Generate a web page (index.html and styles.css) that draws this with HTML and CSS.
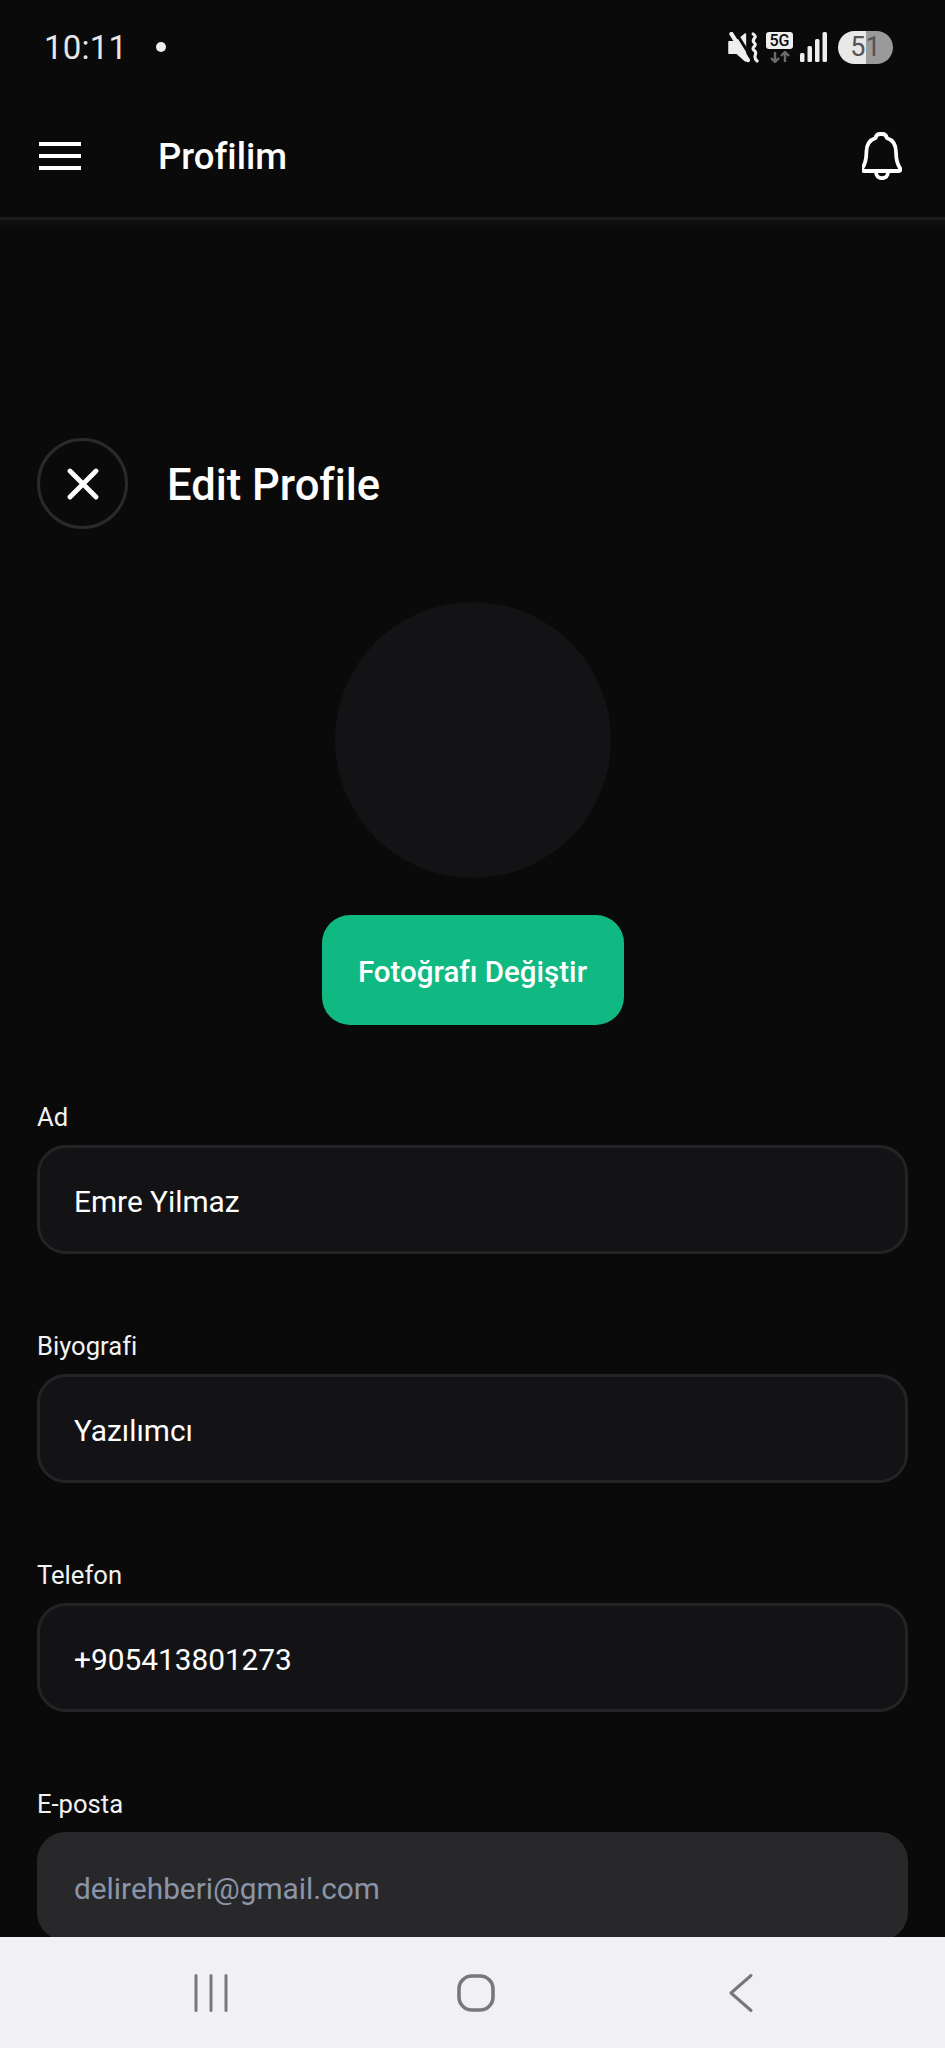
FILE: index.html
```html
<!DOCTYPE html>
<html lang="tr">
<head>
    <meta charset="UTF-8">
    <meta name="viewport" content="width=device-width, initial-scale=1.0">
    <title>Profilim</title>
    <link rel="stylesheet" href="styles.css">
</head>
<body>
    <div class="phone">

        <!-- Status bar -->
        <div class="status-bar">
            <div class="status-left">
                <span class="clock">10:11</span>
                <span class="status-dot"></span>
            </div>
            <div class="status-right">
                <svg class="icon-mute" viewBox="0 0 32 32" width="31" height="31">
                    <path d="M1 10h7l10 -8v28l-9 -8h-8z" fill="#eee" stroke="#eee" stroke-width="1.500" stroke-linejoin="round"/>
                    <path d="M7 -1l20 32" stroke="#0a0a0b" stroke-width="3"/>
                    <path d="M3.500 2l17 27" stroke="#eee" stroke-width="4.400" stroke-linecap="round"/>
                    <path d="M26 2c6 4 -3 5 1 9c4 3 -4 5 0 8c5 3 -3 6 3 11" fill="none" stroke="#eee" stroke-width="3.200" stroke-linecap="round"/>
                </svg>
                <div class="network">
                    <span class="network-label">5G</span>
                    <svg viewBox="0 0 22 12" width="22" height="12">
                        <path d="M6 1v10M2 7l4 4l4 -4M16 11v-10M12 5l4 -4l4 4" fill="none" stroke="#6a6a6a" stroke-width="2.400"/>
                    </svg>
                </div>
                <svg class="icon-signal" viewBox="0 0 27 30" width="27" height="30">
                    <rect x="0" y="21" width="4.500" height="9" rx="1.500"/>
                    <rect x="7.500" y="14" width="4.500" height="16" rx="1.500"/>
                    <rect x="15" y="7" width="4.500" height="23" rx="1.500"/>
                    <rect x="22.500" y="0" width="4.500" height="30" rx="1.500"/>
                </svg>
                <div class="battery">51</div>
            </div>
        </div>

        <!-- Top bar -->
        <header class="top-bar">
            <div class="menu-icon">
                <span></span>
                <span></span>
                <span></span>
            </div>
            <h1 class="top-title">Profilim</h1>
            <svg class="bell" viewBox="0 0 40 48" width="40" height="48">
                <path d="M20 2c2.800 0 4.500 1.800 4.800 4c6.200 2 9.200 7.500 9.200 14c0 8.500 1.500 12.500 4.200 16.500c.8 1.300 0 2.500 -1.500 2.500h-35c-1.500 0 -2.300 -1.200 -1.500 -2.500c2.700 -4 4.200 -8 4.200 -16.500c0 -6.500 3 -12 9.200 -14c.3 -2.200 2 -4 4.800 -4z" fill="none" stroke="#fff" stroke-width="3.800" stroke-linejoin="round"/>
                <path d="M14 40c0 4 2.600 6.200 6 6.200s6 -2.200 6 -6.200" fill="none" stroke="#fff" stroke-width="3.800"/>
            </svg>
        </header>

        <!-- Main Content -->
        <main class="content">
            <div class="edit-head">
                <button class="close-btn" aria-label="Close">
                    <svg viewBox="0 0 32 32" width="32" height="32">
                        <path d="M3 3l26 26M29 3l-26 26" stroke="#fff" stroke-width="4.800" stroke-linecap="round"/>
                    </svg>
                </button>
                <h2 class="edit-title">Edit Profile</h2>
            </div>

            <div class="avatar-block">
                <div class="avatar"></div>
                <button class="photo-btn">Fotoğrafı Değiştir</button>
            </div>

            <div class="field">
                <label class="field-label">Ad</label>
                <div class="field-input">Emre Yilmaz</div>
            </div>
            <div class="field">
                <label class="field-label">Biyografi</label>
                <div class="field-input">Yazılımcı</div>
            </div>
            <div class="field">
                <label class="field-label">Telefon</label>
                <div class="field-input">+905413801273</div>
            </div>
            <div class="field">
                <label class="field-label">E-posta</label>
                <div class="field-input disabled">delirehberi@gmail.com</div>
            </div>
        </main>

        <!-- Android nav bar -->
        <nav class="nav-bar">
            <svg viewBox="0 0 36 38" width="36" height="38">
                <path d="M3 1.500v35M18 1.500v35M33 1.500v35" stroke="#77787b" stroke-width="3" stroke-linecap="round"/>
            </svg>
            <svg class="nav-home" viewBox="0 0 38 38" width="38" height="38">
                <rect x="2" y="2" width="34" height="34" rx="13" fill="none" stroke="#77787b" stroke-width="3.600"/>
            </svg>
            <svg class="nav-back" viewBox="0 0 24 38" width="24" height="38">
                <path d="M22 1.500l-20 17.500l20 17.500" fill="none" stroke="#77787b" stroke-width="3" stroke-linecap="round" stroke-linejoin="round"/>
            </svg>
        </nav>
    </div>
</body>
</html>
```

FILE: styles.css
```css
* {
    margin: 0;
    padding: 0;
    box-sizing: border-box;
}

body {
    font-family: Roboto, "Liberation Sans", sans-serif;
    background-color: #0a0a0b;
    color: #fff;
}

.phone {
    height: 2048px;
    display: flex;
    flex-direction: column;
    overflow: hidden;
}

/* Status bar */
.status-bar {
    height: 94px;
    flex-shrink: 0;
    padding: 0 52px 0 44px;
    display: flex;
    justify-content: space-between;
    align-items: center;
}

.status-left {
    display: flex;
    align-items: center;
    gap: 29px;
}

.clock {
    font-size: 33px;
    letter-spacing: 0.2px;
    color: #e6e6e6;
}

.status-dot {
    width: 10px;
    height: 10px;
    border-radius: 50%;
    background-color: #eee;
}

.status-right {
    display: flex;
    align-items: center;
    gap: 7px;
}

.network {
    display: flex;
    flex-direction: column;
    align-items: center;
    gap: 2px;
}

.network-label {
    width: 27px;
    height: 17px;
    background-color: #eee;
    border-radius: 3px;
    color: #0a0a0b;
    font-size: 16px;
    font-weight: 500;
    line-height: 17px;
    text-align: center;
}

.icon-signal {
    fill: #eee;
}

.battery {
    width: 55px;
    height: 33px;
    margin-left: 4px;
    border-radius: 17px;
    background: linear-gradient(90deg, #e8e8e8 0, #e8e8e8 51%, #9a9a9a 51%);
    color: #555;
    font-size: 27px;
    line-height: 33px;
    text-align: center;
}

/* Top bar */
.top-bar {
    height: 126px;
    flex-shrink: 0;
    padding: 0 43px 0 39px;
    display: flex;
    align-items: center;
    border-bottom: 3px solid #1c1c1e;
}

.menu-icon {
    width: 42px;
    height: 28px;
    display: flex;
    flex-direction: column;
    justify-content: space-between;
}

.menu-icon span {
    height: 4px;
    background-color: #fff;
}

.top-title {
    margin-left: 77px;
    padding-top: 2px;
    flex: 1;
    font-size: 36.5px;
    font-weight: 500;
}

/* Edit form */
.content {
    flex: 1;
    min-height: 0;
    padding: 218px 37px 0;
    background: linear-gradient(180deg, #101011 0, #0a0a0b 12px);
}

.edit-head {
    display: flex;
    align-items: center;
    gap: 39px;
}

.close-btn {
    width: 91px;
    height: 91px;
    border: 3px solid #2a2a2c;
    border-radius: 50%;
    background: none;
    display: flex;
    justify-content: center;
    align-items: center;
}

.edit-title {
    padding-top: 3px;
    font-size: 43.5px;
    font-weight: 500;
}

.avatar-block {
    margin-top: 73px;
    display: flex;
    flex-direction: column;
    align-items: center;
}

.avatar {
    width: 276px;
    height: 276px;
    border-radius: 50%;
    background-color: #131315;
}

.photo-btn {
    width: 302px;
    height: 110px;
    margin-top: 37px;
    padding-top: 3px;
    border: none;
    border-radius: 28px;
    background-color: #10b981;
    color: #fff;
    font-family: Roboto, "Liberation Sans", sans-serif;
    font-size: 29.5px;
    font-weight: 500;
}

.field {
    margin-top: 75px;
}

.field-label {
    display: block;
    height: 45px;
    font-size: 25.6px;
    line-height: 35px;
    color: #f2f2f2;
}

.field-input {
    height: 109px;
    padding: 0 34px;
    border: 3px solid #242427;
    border-radius: 29px;
    background-color: #131315;
    font-size: 29.8px;
    line-height: 107px;
}

.field-input.disabled {
    border-color: #28282b;
    background-color: #28282b;
    color: #8b95a8;
}

/* Nav bar */
.nav-bar {
    height: 111px;
    flex-shrink: 0;
    padding: 37px 0 0 193px;
    display: flex;
    align-items: flex-start;
    gap: 228px;
    background-color: #f1f1f3;
}

.nav-back {
    margin-left: 6px;
}
```
